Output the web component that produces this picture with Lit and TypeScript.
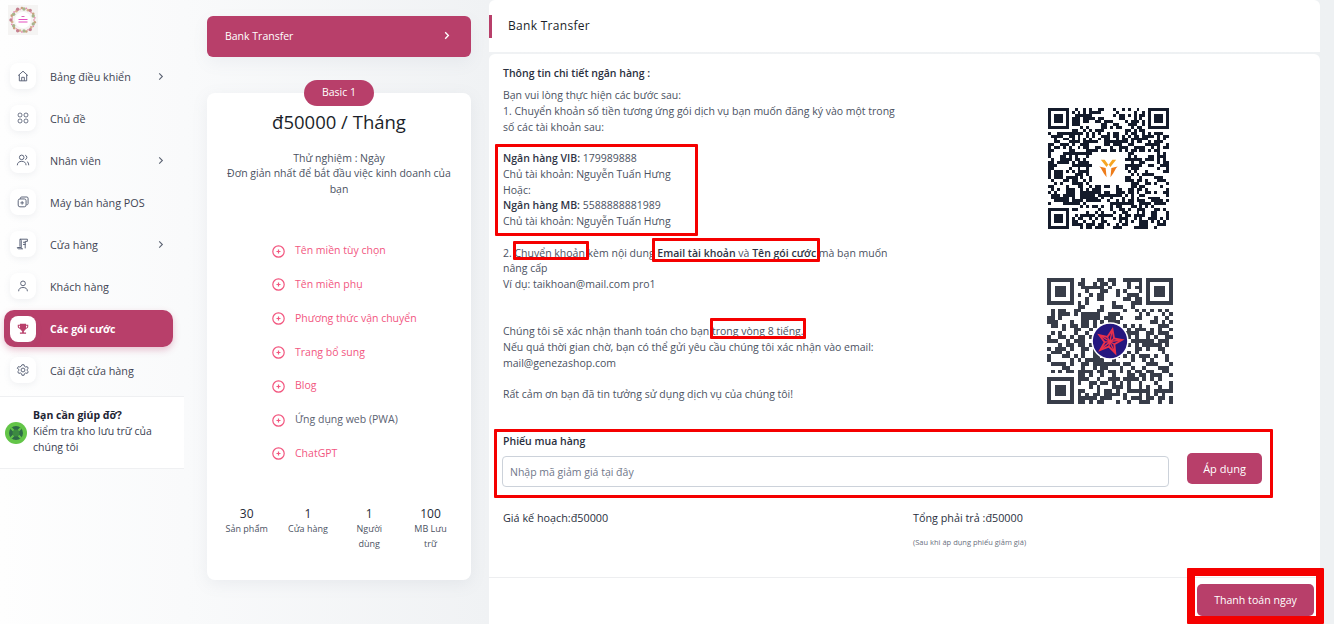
import { LitElement, html, css, svg } from "lit";
import { customElement } from "lit/decorators.js";

function qrPath(n: number, seed: number, hole: number) {
  let s = seed;
  const rnd = () => ((s = (s * 1664525 + 1013904223) >>> 0) / 4294967296);
  const inFinder = (x: number, y: number) =>
    (x < 8 && y < 8) || (x >= n - 8 && y < 8) || (x < 8 && y >= n - 8);
  const c = (n - 1) / 2;
  let d = "";
  for (let y = 0; y < n; y++)
    for (let x = 0; x < n; x++) {
      if (inFinder(x, y)) continue;
      if (Math.abs(x - c) <= hole && Math.abs(y - c) <= hole) continue;
      if (rnd() > 0.5) d += `M${x} ${y}h1v1h-1z`;
    }
  const f = (x: number, y: number) =>
    `M${x} ${y}h7v7h-7zM${x + 1} ${y + 1}v5h5v-5zM${x + 2} ${y + 2}h3v3h-3z`;
  return d + f(0, 0) + f(n - 7, 0) + f(0, n - 7);
}

const icons: Record<string, unknown> = {
  home: svg`<path d="M2.500 7.500 8 2.500l5.500 5M3.800 6.500v7h8.400v-7M6.500 13.500V9.500h3v4"/>`,
  grid: svg`<rect x="2.500" y="2.500" width="4.200" height="4.200" rx="1.600"/><rect x="9.300" y="2.500" width="4.200" height="4.200" rx="1.600"/><rect x="2.500" y="9.300" width="4.200" height="4.200" rx="1.600"/><rect x="9.300" y="9.300" width="4.200" height="4.200" rx="1.600"/>`,
  users: svg`<circle cx="6.500" cy="5" r="2.600"/><path d="M1.500 14c0-3 2.200-4.500 5-4.500s5 1.500 5 4.500M10.500 2.500a2.600 2.600 0 0 1 0 5M12.500 9.800c1.300.6 2 2 2 4.200"/>`,
  pos: svg`<rect x="2.500" y="4.500" width="9" height="9" rx="2"/><path d="M5 4.500V3.800c0-1 .6-1.500 1.500-1.500h6c.8 0 1.300.6 1.300 1.400v6c0 1-.5 1.500-1.800 1.500M7 7v4M5 9h4"/>`,
  store: svg`<path d="M4.500 2.500h8.500v2.500h-2.500M4.500 2.500c1 0 1.500.7 1.500 1.500v8c0 .9.600 1.500 1.500 1.500H3c-.8 0-1.500-.6-1.500-1.500h4.500M4.500 2.500V11M8 6h3M8 8.500h3M10.500 5v8"/>`,
  user: svg`<circle cx="8" cy="5" r="2.700"/><path d="M3 14c0-3 2-4.300 5-4.300s5 1.300 5 4.300"/>`,
  trophy: svg`<path fill="#b83f6a" stroke="none" d="M4.500 2h7v1h2.500v2.200c0 1.500-1.200 2.500-2.800 2.700-.5 1.200-1.300 1.900-2.200 2.100v2h2.500v1.500h-7V12H7v-2C6.100 9.800 5.300 9.100 4.800 7.900 3.200 7.700 2 6.700 2 5.200V3h2.500zM3.200 4.200v1c0 .8.500 1.300 1.400 1.500l-.1-2.500zM12.800 4.200h-1.300l-.1 2.500c.9-.2 1.400-.7 1.400-1.500z"/>`,
  gear: svg`<circle cx="8" cy="8" r="2.200"/><path d="M6.800 2h2.400l.4 1.700 1.500.9 1.700-.5 1.200 2-1.300 1.200v1.400l1.300 1.200-1.200 2-1.700-.5-1.500.9-.4 1.700H6.800l-.4-1.700-1.500-.9-1.700.5-1.200-2 1.300-1.200V7.300L1.500 6.100l1.200-2 1.700.5 1.500-.9z"/>`,
};

const chevron = html`<svg class="chev" viewBox="0 0 6 10"><path d="M1 1.500 4.500 5 1 8.500"/></svg>`;
const plus = html`<svg class="plus" viewBox="0 0 13 13"><circle cx="6.500" cy="6.500" r="5.700"/><path d="M6.500 4.500v4M4.500 6.500h4"/></svg>`;

const nav = [
  ["home", "Bảng điều khiển", true],
  ["grid", "Chủ đề", false],
  ["users", "Nhân viên", true],
  ["pos", "Máy bán hàng POS", false],
  ["store", "Cửa hàng", true],
  ["user", "Khách hàng", false],
  ["trophy", "Các gói cước", false],
  ["gear", "Cài đặt cửa hàng", false],
] as const;

const features = [
  ["Tên miền tùy chọn", true],
  ["Tên miền phụ", true],
  ["Phương thức vận chuyển", true],
  ["Trang bổ sung", true],
  ["Blog", true],
  ["Ứng dụng web (PWA)", false],
  ["ChatGPT", true],
] as const;

const stats = [
  ["30", "Sản phẩm"],
  ["1", "Cửa hàng"],
  ["1", "Người dùng"],
  ["100", "MB Lưu trữ"],
];

const marks = [
  [495, 144, 203, 92, 3],
  [513, 241, 76, 19, 3],
  [652, 238, 168, 24, 3],
  [710, 318, 96, 21, 3],
  [494, 429, 779, 69, 3],
  [1187, 568, 137, 56, 8],
];

const wreath = Array.from({ length: 34 }, (_, i) => {
  const a = (i / 34) * Math.PI * 2;
  const colors = ["#e9a3b4", "#c9a27e", "#a8b48c", "#e58bb0", "#d8b48f", "#c5808f"];
  return svg`<circle cx=${15 + Math.cos(a) * (11 + (i % 2))} cy=${15 + Math.sin(a) * (11 + (i % 2))} r=${0.9 + (i % 3) * 0.4} fill=${colors[i % 6]} />`;
});

@customElement("app-root")
export class AppRoot extends LitElement {
  static styles = css`
    :host {
      display: block;
      position: relative;
      width: 1334px;
      height: 624px;
      overflow: hidden;
      background: linear-gradient(90deg, #fefefe 0, #f9fafb 184px, #f0f2f4 489px, #eef1f3 100%);
      font-family: "Open Sans", "Noto Sans", sans-serif;
      font-size: 10.500px;
      color: #4b5262;
    }
    .page {
      display: grid;
      grid-template-columns: 184px 264px 831px;
      column-gap: 0;
      height: 624px;
    }
    .side { height: 624px; }
    .logo {
      display: block;
      width: 30px;
      height: 30px;
      margin: 5px 0 20px 8px;
      background: #f5f4f3;
    }
    .item {
      display: flex;
      align-items: center;
      height: 42px;
      margin: 0 11px 0 4px;
      padding: 0 6px;
      box-sizing: border-box;
      color: #3f4553;
      font-size: 10.800px;
    }
    .item .lbl { flex: 1; margin-left: 14px; }
    .ibox {
      width: 26px;
      height: 26px;
      border-radius: 8px;
      background: #fff;
      box-shadow: 0 2px 6px rgba(120, 130, 150, 0.1);
      display: flex;
      align-items: center;
      justify-content: center;
    }
    .ibox svg {
      width: 14px;
      height: 14px;
      fill: none;
      stroke: #596277;
      stroke-width: 1.100;
    }
    .chev {
      width: 6px;
      height: 9px;
      margin-right: 3px;
      fill: none;
      stroke: #5b6272;
      stroke-width: 1.200;
    }
    .item.active {
      height: 37px;
      margin-top: 3px;
      margin-bottom: 2px;
      border-radius: 10px;
      background: #b83f6a;
      color: #fff;
      font-weight: 700;
      font-size: 10.500px;
      box-shadow: 0 3px 7px rgba(184, 63, 106, 0.3);
    }
    .help {
      display: flex;
      align-items: center;
      gap: 6px;
      margin-top: 5px;
      height: 73px;
      box-sizing: border-box;
      padding: 0 0 4px 5px;
      background: #fff;
      border-top: 1px solid #eff0f2;
      border-bottom: 1px solid #eff0f2;
      line-height: 16px;
      color: #3a4152;
    }
    .help svg { width: 22px; height: 22px; flex: none; margin-top: 4px; }
    .help b { color: #1d2433; font-weight: 700; display: block; }

    .col { padding: 16px 0 0 23px; width: 264px; }
    .bank {
      display: flex;
      align-items: center;
      justify-content: space-between;
      height: 41px;
      padding: 0 21px 2px 18px;
      box-sizing: border-box;
      border-radius: 6px;
      background: #b83f6a;
      color: #fff;
      font-weight: 500;
      box-shadow: 0 6px 16px rgba(120, 130, 150, 0.08);
    }
    .bank .chev { stroke: #fff; stroke-width: 1.500; margin: 0; }
    .plan {
      position: relative;
      margin-top: 36px;
      height: 487px;
      border-radius: 8px;
      background: #fff;
      box-shadow: 0 4px 16px rgba(120, 130, 150, 0.1);
      box-sizing: border-box;
      padding-top: 16px;
      text-align: center;
    }
    .pill {
      position: absolute;
      left: 97px;
      top: -13px;
      width: 70px;
      height: 26px;
      line-height: 25px;
      border-radius: 13px;
      background: #b83f6a;
      color: #fff;
      font-weight: 500;
      font-size: 10.500px;
    }
    .price {
      font-size: 18.500px;
      line-height: 26px;
      font-weight: 500;
      color: #1b1f2a;
    }
    .desc {
      margin-top: 15.500px;
      padding: 0 18px;
      line-height: 15.750px;
    }
    .feats {
      list-style: none;
      margin: 36.500px 0 0;
      padding: 0 0 0 65px;
      text-align: left;
    }
    .feats li {
      display: flex;
      align-items: center;
      gap: 10px;
      height: 33.800px;
      color: #f2567f;
    }
    .feats li span { margin-top: -2px; }
    .feats li.off { color: #5b6272; }
    .plus {
      width: 13px;
      height: 13px;
      fill: none;
      stroke: #f2567f;
      stroke-width: 1.200;
      flex: none;
    }
    .stats {
      display: grid;
      grid-template-columns: repeat(4, 61.300px);
      margin: 35px 0 0 9px;
      line-height: 15px;
      font-size: 9px;
      color: #4b5262;
    }
    .stats b {
      display: block;
      font-size: 12px;
      font-weight: 500;
      color: #262b38;
      line-height: 15px;
    }
    .stats span { display: block; padding: 0 9px; }

    .main { margin-left: 41px; width: 831px; }
    .head {
      display: flex;
      align-items: center;
      height: 52px;
      background: #fff;
      color: #1b1f2a;
      font-size: 12px;
      font-weight: 500;
      letter-spacing: 0.300px;
      padding: 0 0 1px 19px;
      box-sizing: border-box;
      position: relative;
      border-radius: 6px 6px 0 0;
    }
    .accent {
      position: absolute;
      left: 0;
      top: 15px;
      width: 3px;
      height: 23px;
      background: #b83f6a;
    }
    .card {
      margin-top: 2px;
      height: 524px;
      box-sizing: border-box;
      background: #fff;
      border-radius: 6px 6px 0 0;
      border-bottom: 1px solid #edeef0;
      padding: 11px 14px 0;
    }
    .cols {
      display: grid;
      grid-template-columns: 400px 1fr;
      height: 357px;
    }
    h4 {
      margin: 0 0 7px;
      font-size: 10.500px;
      font-weight: 600;
      line-height: 16px;
      color: #2a3040;
    }
    .text { line-height: 15.750px; color: #4b5262; }
    .text b { font-weight: 600; color: #2f3545; }
    .qrs {
      display: flex;
      flex-direction: column;
      padding: 43px 0 0 145px;
      gap: 49px;
    }
    .qr { display: block; }
    .qr2 { margin-left: -1px; }
    .coupon { margin-top: 11px; }
    .coupon h4 { margin: 0 0 7px; }
    .row {
      display: flex;
      align-items: flex-start;
      gap: 18px;
    }
    input {
      flex: none;
      width: 667px;
      margin-left: -1px;
      height: 31px;
      box-sizing: border-box;
      padding: 0 7px;
      border: 1px solid #ccd2da;
      border-radius: 4px;
      font: inherit;
      color: #4b5262;
      background: #fff;
      outline: none;
    }
    input::placeholder { color: #70778a; opacity: 1; }
    .btn {
      border: 0;
      border-radius: 5px;
      background: #b83f6a;
      color: #fff;
      font: inherit;
      font-weight: 500;
    }
    .apply { width: 75px; height: 31px; margin-top: -3px; font-size: 11px; }
    .sum {
      display: grid;
      grid-template-columns: 410px 1fr;
      margin-top: 23px;
      color: #2a3040;
      line-height: 16px;
      font-size: 10.800px;
    }
    .sum small {
      display: block;
      margin-top: 8px;
      font-size: 7.500px;
      color: #6a7080;
    }
    .foot {
      display: flex;
      justify-content: flex-end;
      height: 48px;
      box-sizing: border-box;
      background: #fff;
      padding: 6px 6px 0 0;
    }
    .pay { width: 117px; height: 32px; font-size: 10.600px; }

    .mark {
      position: absolute;
      box-sizing: border-box;
      border-style: solid;
      border-color: #f50000;
      border-radius: 1px;
      pointer-events: none;
    }
  `;

  render() {
    return html`
      <div class="page">
        <aside class="side">
          <svg class="logo" viewBox="0 0 30 30">
            ${wreath}
            <circle cx="15" cy="15" r="8" fill="#fff" />
            <rect x="13.500" y="11" width="3" height=".9" fill="#d65ab0" />
            <rect x="10.500" y="14" width="9" height="1" fill="#e64fc0" />
            <rect x="10.500" y="16.500" width="9" height="1" fill="#e64fc0" />
          </svg>
          <nav>
            ${nav.map(
              ([ic, label, more]) => html`
                <div class="item ${ic === "trophy" ? "active" : ""}">
                  <span class="ibox"><svg viewBox="0 0 16 16">${icons[ic]}</svg></span>
                  <span class="lbl">${label}</span>
                  ${more ? chevron : ""}
                </div>
              `
            )}
          </nav>
          <div class="help">
            <svg viewBox="0 0 22 22">
              <circle cx="11" cy="11" r="11" fill="#63c548" />
              <circle cx="11" cy="11" r="7" fill="#2f6a48" />
              <path d="M6 6l10 10M16 6 6 16" stroke="#63c548" stroke-width="2" />
              <circle cx="11" cy="11" r="3.500" fill="#3c8a40" />
            </svg>
            <div><b>Bạn cần giúp đỡ?</b>Kiểm tra kho lưu trữ của<br />chúng tôi</div>
          </div>
        </aside>

        <section class="col">
          <div class="bank"><span>Bank Transfer</span>${chevron}</div>
          <div class="plan">
            <div class="pill">Basic 1</div>
            <div class="price">đ50000 / Tháng</div>
            <div class="desc">Thử nghiệm : Ngày<br />Đơn giản nhất để bắt đầu việc kinh doanh của bạn</div>
            <ul class="feats">
              ${features.map(
                ([t, on]) => html`<li class=${on ? "" : "off"}>${plus}<span>${t}</span></li>`
              )}
            </ul>
            <div class="stats">
              ${stats.map(([n, l]) => html`<div><b>${n}</b><span>${l}</span></div>`)}
            </div>
          </div>
        </section>

        <main class="main">
          <div class="head"><i class="accent"></i>Bank Transfer</div>
          <div class="card">
            <div class="cols">
              <div>
                <h4>Thông tin chi tiết ngân hàng :</h4>
                <div class="text">
                  Bạn vui lòng thực hiện các bước sau:<br />
                  1. Chuyển khoản số tiền tương ứng gói dịch vụ bạn muốn đăng ký vào một trong số các tài khoản sau:<br /><br />
                  <b>Ngân hàng VIB:</b> 179989888<br />
                  Chủ tài khoản: Nguyễn Tuấn Hưng<br />
                  Hoặc:<br />
                  <b>Ngân hàng MB:</b> 5588888881989<br />
                  Chủ tài khoản: Nguyễn Tuấn Hưng<br /><br />
                  2. Chuyển khoản kèm nội dung <b>Email tài khoản</b> và <b>Tên gói cước</b> mà bạn muốn nâng cấp<br />
                  Ví dụ: taikhoan@mail.com pro1<br /><br /><br />
                  Chúng tôi sẽ xác nhận thanh toán cho bạn trong vòng 8 tiếng.<br />
                  Nếu quá thời gian chờ, bạn có thể gửi yêu cầu chúng tôi xác nhận vào email: mail@genezashop.com<br /><br />
                  Rất cảm ơn bạn đã tin tưởng sử dụng dịch vụ của chúng tôi!
                </div>
              </div>
              <div class="qrs">
                <svg class="qr" width="121" height="121" viewBox="0 0 41 41" shape-rendering="crispEdges">
                  <path fill="#141b2b" fill-rule="evenodd" d=${qrPath(41, 17, 5)} />
                  <g transform="translate(20.500 20.500) scale(.65)" shape-rendering="auto">
                    <path fill="#f6a623" d="M-4-4.500-1-.8 0-2.200 1-.8 4-4.500 2-4.500 0-1.800-2-4.500z" />
                    <path fill="#ee7c1a" d="M-4.800-1-1.500-.2-1 4.500-2.500 2.500-4-.2zM4.800-1 1.500-.2 1 4.500 2.500 2.500 4-.2z" />
                  </g>
                </svg>
                <svg class="qr qr2" width="126" height="126" viewBox="0 0 33 33" shape-rendering="crispEdges">
                  <path fill="#383d49" fill-rule="evenodd" d=${qrPath(33, 91, 0)} />
                  <g transform="translate(16.500 16.500)" shape-rendering="auto">
                    <circle r="4.700" fill="#25177f" stroke="#fff" stroke-width=".4" />
                    <g transform="rotate(12)">
                      <path fill="none" stroke="#e8304c" stroke-width=".5" d="M0-3.100.9-.9 3-.9 1.300.6 2 2.800 0 1.500-2 2.800-1.300.6-3-.9-.9-.9z" />
                      <path fill="none" stroke="#e8304c" stroke-width=".35" d="M0 1.500 0-3.100M3-.9-1.300.6M2 2.800-.9-.9M-2 2.800.9-.9M-3-.9 1.300.6" />
                    </g>
                  </g>
                </svg>
              </div>
            </div>
            <div class="coupon">
              <h4>Phiếu mua hàng</h4>
              <div class="row">
                <input placeholder="Nhập mã giảm giá tại đây" />
                <button class="btn apply">Áp dụng</button>
              </div>
            </div>
            <div class="sum">
              <div>Giá kế hoạch:đ50000</div>
              <div>Tổng phải trả :đ50000<small>(Sau khi áp dụng phiếu giảm giá)</small></div>
            </div>
          </div>
          <div class="foot"><button class="btn pay">Thanh toán ngay</button></div>
        </main>
      </div>
      ${marks.map(
        ([x, y, w, h, b]) =>
          html`<div class="mark" style="left:${x}px;top:${y}px;width:${w}px;height:${h}px;border-width:${b}px"></div>`
      )}
    `;
  }
}
